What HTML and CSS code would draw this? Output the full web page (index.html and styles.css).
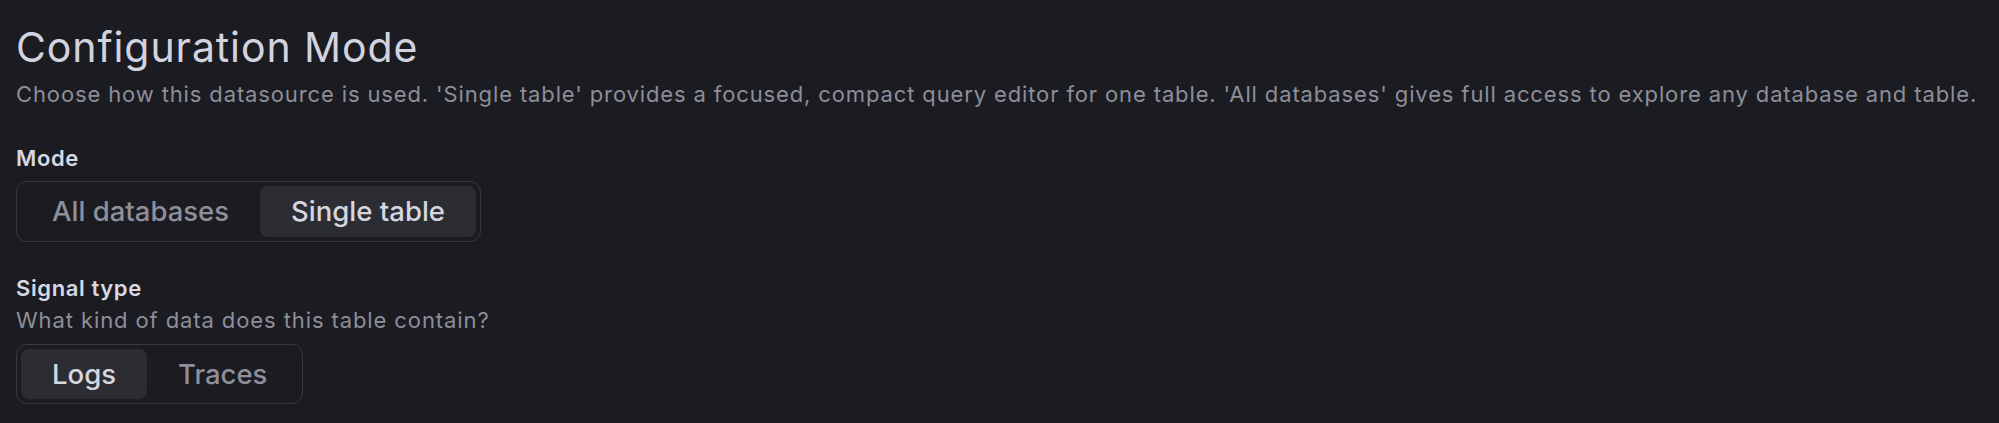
FILE: index.html
```html
<!DOCTYPE html>
<html lang="en">
<head>
<meta charset="utf-8">
<title>Configuration Mode</title>
<link rel="stylesheet" href="styles.css">
</head>
<body>
<section class="config">
  <h3 class="title">Configuration Mode</h3>
  <p class="desc">Choose how this datasource is used. 'Single table' provides a focused, compact query editor for one table. 'All databases' gives full access to explore any database and table.</p>

  <div class="field field-mode">
    <div class="label">Mode</div>
    <div class="radio-group">
      <button class="radio">All databases</button>
      <button class="radio active">Single table</button>
    </div>
  </div>

  <div class="field field-signal">
    <div class="label">Signal type</div>
    <div class="hint">What kind of data does this table contain?</div>
    <div class="radio-group">
      <button class="radio active">Logs</button>
      <button class="radio">Traces</button>
    </div>
  </div>
</section>
</body>
</html>
```
FILE: styles.css
```css
html, body {
  margin: 0;
  padding: 0;
  background: #1b1c21;
  height: 100%;
}
body {
  font-family: Inter, "Noto Sans", sans-serif;
  color: #ccccdc;
}
.config {
  padding: 23px 16px 0 16px;
  display: flex;
  flex-direction: column;
  align-items: flex-start;
}
.title {
  margin: 0;
  font-size: 41px;
  line-height: 49px;
  font-weight: 400;
  letter-spacing: 0.9px;
  color: #d3d3e0;
}
.desc {
  margin: 7px 0 0 0;
  font-size: 22px;
  line-height: 30px;
  letter-spacing: 0.87px;
  color: #8d8e9a;
}
.field {
  display: flex;
  flex-direction: column;
  align-items: flex-start;
}
.field-mode { margin-top: 34px; }
.field-signal { margin-top: 31px; }
.label {
  font-size: 22px;
  line-height: 30px;
  font-weight: 600;
  letter-spacing: 0.6px;
  color: #d8d8e3;
}
.hint {
  margin-top: 2px;
  font-size: 22px;
  line-height: 30px;
  letter-spacing: 0.9px;
  color: #8d8e9a;
}
.radio-group {
  margin-top: 8px;
  display: flex;
  padding: 4px;
  border: 1px solid #383940;
  border-radius: 11px;
}
.field-signal .radio-group { margin-top: 9px; }
.radio {
  font-family: inherit;
  background: transparent;
  border: none;
  border-radius: 8px;
  padding: 0 31px;
  height: 51px;
  line-height: 51px;
  font-size: 27.5px;
  font-weight: 500;
  color: #8e8f9b;
}
.field-signal .radio { height: 50px; line-height: 50px; }
.radio.active {
  background: #2c2d33;
  color: #d6d6e1;
}
```
